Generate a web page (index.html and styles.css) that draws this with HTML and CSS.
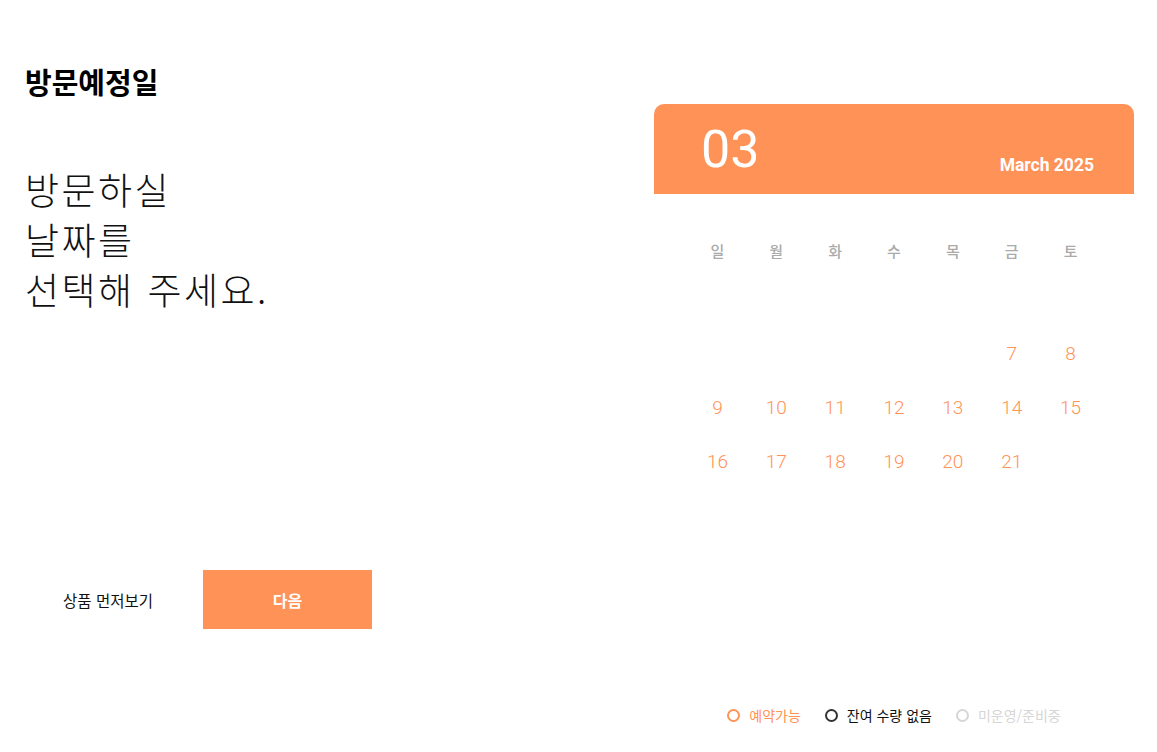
FILE: index.html
```html
<!DOCTYPE html>
<html lang="ko">
<head>
<meta charset="utf-8">
<title>방문예정일</title>
<link rel="stylesheet" href="styles.css">
</head>
<body>
<div class="page">
  <section class="left">
    <h1 class="title">방문예정일</h1>
    <p class="lead">방문하실<br>날짜를<br>선택해 주세요.</p>
    <div class="actions">
      <button class="btn btn-ghost">상품 먼저보기</button>
      <button class="btn btn-primary">다음</button>
    </div>
  </section>
  <section class="right">
    <div class="calendar">
      <div class="cal-head">
        <span class="cal-month">03</span>
        <span class="cal-label">March 2025</span>
      </div>
      <div class="cal-body">
        <div class="cal-grid weekdays">
          <span>일</span><span>월</span><span>화</span><span>수</span><span>목</span><span>금</span><span>토</span>
        </div>
        <div class="cal-grid days">
          <span></span><span></span><span></span><span></span><span></span><span></span><span></span>
          <span></span><span></span><span></span><span></span><span></span><span>7</span><span>8</span>
          <span>9</span><span>10</span><span>11</span><span>12</span><span>13</span><span>14</span><span>15</span>
          <span>16</span><span>17</span><span>18</span><span>19</span><span>20</span><span>21</span><span></span>
        </div>
      </div>
    </div>
    <ul class="legend">
      <li class="lg lg-on"><i class="dot"></i>예약가능</li>
      <li class="lg lg-full"><i class="dot"></i>잔여 수량 없음</li>
      <li class="lg lg-off"><i class="dot"></i>미운영/준비중</li>
    </ul>
  </section>
</div>
</body>
</html>
```

FILE: styles.css
```css
* { box-sizing: border-box; }
html, body { margin: 0; padding: 0; background: #fff; }
body {
  font-family: "Noto Sans CJK KR", "Noto Sans", sans-serif;
  color: #111;
  width: 1157px;
  height: 752px;
  overflow: hidden;
}
.page {
  display: flex;
  justify-content: space-between;
  padding: 0 23px 0 25px;
  height: 752px;
}
.left {
  display: flex;
  flex-direction: column;
  width: 360px;
}
.title {
  margin: 63px 0 0;
  font-size: 29px;
  line-height: 36px;
  font-weight: 700;
  color: #000;
}
.lead {
  margin: 65px 0 0;
  font-size: 37px;
  line-height: 50px;
  font-weight: 200;
  color: #111;
  letter-spacing: 2.5px;
}
.actions {
  display: flex;
  gap: 9px;
  margin-top: 256px;
}
.btn {
  width: 169px;
  height: 59px;
  border: 0;
  padding: 0;
  font-family: "Noto Sans CJK KR", sans-serif;
  cursor: pointer;
}
.btn-ghost {
  background: #fff;
  color: #111;
  font-size: 15.5px;
  font-weight: 400;
  padding-right: 3px;
}
.btn-primary {
  background: #ff9256;
  color: #fff;
  font-size: 16px;
  font-weight: 700;
}
.right {
  width: 480px;
  padding-top: 104px;
  display: flex;
  flex-direction: column;
}
.calendar { width: 480px; }
.cal-head {
  height: 90px;
  background: #ff9256;
  border-radius: 10px 10px 0 0;
  display: flex;
  justify-content: space-between;
  align-items: flex-start;
  padding: 20px 40px 19px 47px;
  color: #fff;
  font-family: Roboto, "Noto Sans", sans-serif;
}
.cal-month {
  font-size: 52px;
  line-height: 52px;
  font-weight: 400;
}
.cal-label {
  align-self: flex-end;
  font-size: 17.5px;
  line-height: 20px;
  font-weight: 700;
}
.cal-body {
  padding: 36px 34px 0;
}
.cal-grid {
  display: grid;
  grid-template-columns: repeat(7, 1fr);
  text-align: center;
}
.weekdays span {
  height: 42px;
  line-height: 42px;
  font-size: 15px;
  color: #aaa;
  font-weight: 500;
}
.days span {
  height: 54px;
  line-height: 55px;
  font-family: Roboto, "Noto Sans", sans-serif;
  font-size: 19px;
  font-weight: 300;
  color: #ff9256;
}
.legend {
  list-style: none;
  margin: 217px 0 0;
  padding: 0;
  display: flex;
  justify-content: center;
  gap: 24px;
  font-size: 14px;
  line-height: 20px;
}
.lg {
  display: flex;
  align-items: center;
  gap: 9px;
}
.dot {
  width: 13px;
  height: 13px;
  border-radius: 50%;
  border: 2px solid currentColor;
  display: block;
}
.lg-on { color: #ff9256; }
.lg-full { color: #111; }
.lg-full .dot { border-color: #333; }
.lg-off { color: #d6d6d6; }
```
